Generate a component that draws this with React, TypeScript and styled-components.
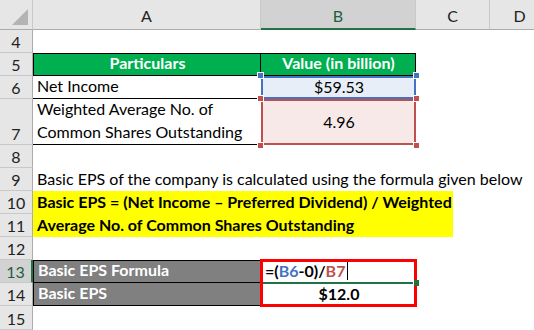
import React from "react";
import styled, { createGlobalStyle, css } from "styled-components";

const GlobalStyle = createGlobalStyle`
  html, body {
    margin: 0;
    padding: 0;
    background: #ffffff;
    overflow: hidden;
  }
  body {
    font-family: "Lato", "Liberation Sans", sans-serif;
    font-size: 16px;
    color: #000;
  }
`;

const HEADER_BG = "#e6e6e6";
const HEADER_SEL = "#d2d2d2";
const HEADER_LINE = "#c8c8c8";
const EXCEL_GREEN = "#217346";

const Sheet = styled.div`
  display: grid;
  grid-template-columns: 33px 228px 155px 74px 60px;
  grid-template-rows: 30px 23px 23px 23px 46px 23px 23px 23px 23px 23px 23px 23px 24px;
  width: 534px;
  height: 330px;
  overflow: hidden;
`;

const Corner = styled.div`
  grid-row: 1;
  grid-column: 1;
  position: relative;
  background: ${HEADER_BG};
  border-right: 1px solid ${HEADER_LINE};
  border-bottom: 1px solid #ababab;
  box-sizing: border-box;

  &::after {
    content: "";
    position: absolute;
    right: 4px;
    bottom: 4px;
    width: 0;
    height: 0;
    border-left: 16px solid transparent;
    border-bottom: 16px solid #b4b4b4;
  }
`;

const ColHead = styled.div<{ $col: number; $sel?: boolean }>`
  grid-row: 1;
  grid-column: ${({ $col }) => $col};
  display: flex;
  align-items: center;
  justify-content: center;
  padding-top: 2px;
  box-sizing: border-box;
  background: ${({ $sel }) => ($sel ? HEADER_SEL : HEADER_BG)};
  border-right: 1px solid ${HEADER_LINE};
  border-bottom: ${({ $sel }) => ($sel ? `2px solid ${EXCEL_GREEN}` : "1px solid #ababab")};
  color: ${({ $sel }) => ($sel ? "#1f5f3f" : "#222")};
  font-size: 16px;
`;

const RowHead = styled.div<{ $row: number; $sel?: boolean }>`
  grid-row: ${({ $row }) => $row};
  grid-column: 1;
  display: flex;
  align-items: flex-end;
  justify-content: center;
  padding-bottom: 1px;
  box-sizing: border-box;
  background: ${({ $sel }) => ($sel ? HEADER_SEL : HEADER_BG)};
  border-right: ${({ $sel }) => ($sel ? `2px solid ${EXCEL_GREEN}` : "1px solid #ababab")};
  border-bottom: 1px solid ${HEADER_LINE};
  color: ${({ $sel }) => ($sel ? "#1f5f3f" : "#222")};
  font-size: 16px;
`;

type Fill = "green" | "blue" | "pink" | "yellow" | "gray" | "none";

const fills: Record<Fill, string> = {
  green: "#00b050",
  blue: "#e8eef8",
  pink: "#f8e9e9",
  yellow: "#ffff00",
  gray: "#808080",
  none: "transparent",
};

const Cell = styled.div<{
  $row: number;
  $col: string;
  $fill?: Fill;
  $align?: "left" | "center";
  $bold?: boolean;
  $light?: boolean;
  $bottom?: boolean;
  $box?: boolean;
}>`
  grid-row: ${({ $row }) => $row};
  grid-column: ${({ $col }) => $col};
  position: relative;
  display: flex;
  align-items: flex-end;
  justify-content: ${({ $align }) => ($align === "center" ? "center" : "flex-start")};
  padding: 0 3px 1px 4px;
  box-sizing: border-box;
  background: ${({ $fill }) => fills[$fill || "none"]};
  font-weight: ${({ $bold }) => ($bold ? 700 : 400)};
  color: ${({ $light }) => ($light ? "#ffffff" : "#000000")};
  white-space: nowrap;
  line-height: 22px;
  ${({ $bottom }) =>
    $bottom &&
    css`
      border-bottom: 1px solid #000;
    `}
  ${({ $box }) =>
    $box &&
    css`
      border: 1px solid #000;
    `}
`;

const Wrapped = styled.div`
  white-space: normal;
  line-height: 23px;
`;

const RefBox = styled.div<{ $color: string }>`
  position: absolute;
  inset: 0;
  border: 2px solid ${({ $color }) => $color};
  pointer-events: none;
`;

const Handle = styled.span<{ $color: string; $x: "l" | "r"; $y: "t" | "b" }>`
  position: absolute;
  width: 5px;
  height: 5px;
  background: ${({ $color }) => $color};
  border: 1px solid #fff;
  ${({ $x }) => ($x === "l" ? "left: -4px;" : "right: -4px;")}
  ${({ $y }) => ($y === "t" ? "top: -4px;" : "bottom: -4px;")}
  z-index: 2;
`;

const RedFrame = styled.div`
  grid-row: 11 / 13;
  grid-column: 3;
  margin: -1px;
  border: 3px solid #ff0000;
  z-index: 3;
  pointer-events: none;
`;

const ActiveLine = styled.div`
  position: absolute;
  left: 2px;
  right: 2px;
  bottom: -1px;
  height: 2px;
  background: ${EXCEL_GREEN};
  z-index: 4;

  &::after {
    content: "";
    position: absolute;
    right: -5px;
    top: -2px;
    width: 5px;
    height: 6px;
    background: ${EXCEL_GREEN};
    border-left: 1px solid #fff;
  }
`;

const Ref = styled.span<{ $c: string }>`
  color: ${({ $c }) => $c};
`;

const Caret = styled.span`
  display: inline-block;
  width: 1px;
  height: 18px;
  margin-left: 2px;
  background: #000;
  align-self: center;
`;

const rows = [4, 5, 6, 7, 8, 9, 10, 11, 12, 13, 14, 15];

export default function App() {
  return (
    <>
      <GlobalStyle />
      <Sheet>
        <Corner />
        <ColHead $col={2}>A</ColHead>
        <ColHead $col={3} $sel>B</ColHead>
        <ColHead $col={4}>C</ColHead>
        <ColHead $col={5}>D</ColHead>

        {rows.map((r, i) => (
          <RowHead key={r} $row={i + 2} $sel={r === 13}>
            {r}
          </RowHead>
        ))}

        <Cell $row={3} $col="2" $fill="green" $align="center" $bold $light $box>
          Particulars
        </Cell>
        <Cell $row={3} $col="3" $fill="green" $align="center" $bold $light $box style={{ borderLeft: "none" }}>
          Value (in billion)
        </Cell>

        <Cell $row={4} $col="2" $bottom>
          Net Income
        </Cell>
        <Cell $row={4} $col="3" $fill="blue" $align="center">
          $59.53
          <RefBox $color="#4472c4" />
          <Handle $color="#4472c4" $x="l" $y="t" />
          <Handle $color="#4472c4" $x="r" $y="t" />
        </Cell>

        <Cell $row={5} $col="2" $bottom>
          <Wrapped>
            Weighted Average No. of
            <br />
            Common Shares Outstanding
          </Wrapped>
        </Cell>
        <Cell $row={5} $col="3" $fill="pink" $align="center" style={{ alignItems: "center" }}>
          4.96
          <RefBox $color="#c0504d" />
          <Handle $color="#c0504d" $x="l" $y="t" />
          <Handle $color="#c0504d" $x="r" $y="t" />
          <Handle $color="#c0504d" $x="l" $y="b" />
          <Handle $color="#c0504d" $x="r" $y="b" />
        </Cell>

        <Cell $row={7} $col="2 / 6">
          Basic EPS of the company is calculated using the formula given below
        </Cell>
        <Cell $row={8} $col="2 / 4" $fill="yellow" $bold style={{ marginRight: "-37px" }}>
          Basic EPS = (Net Income – Preferred Dividend) / Weighted
        </Cell>
        <Cell $row={9} $col="2 / 4" $fill="yellow" $bold style={{ marginRight: "-37px" }}>
          Average No. of Common Shares Outstanding
        </Cell>

        <Cell $row={11} $col="2" $fill="gray" $bold $light $box>
          Basic EPS Formula
        </Cell>
        <Cell $row={11} $col="3" $bold>
          =(<Ref $c="#4472c4">B6</Ref>-0)/<Ref $c="#c0504d">B7</Ref>
          <Caret />
          <ActiveLine />
        </Cell>
        <Cell $row={12} $col="2" $fill="gray" $bold $light $box style={{ borderTop: "none" }}>
          Basic EPS
        </Cell>
        <Cell $row={12} $col="3" $bold $align="center">
          $12.0
        </Cell>
        <RedFrame />
      </Sheet>
    </>
  );
}
